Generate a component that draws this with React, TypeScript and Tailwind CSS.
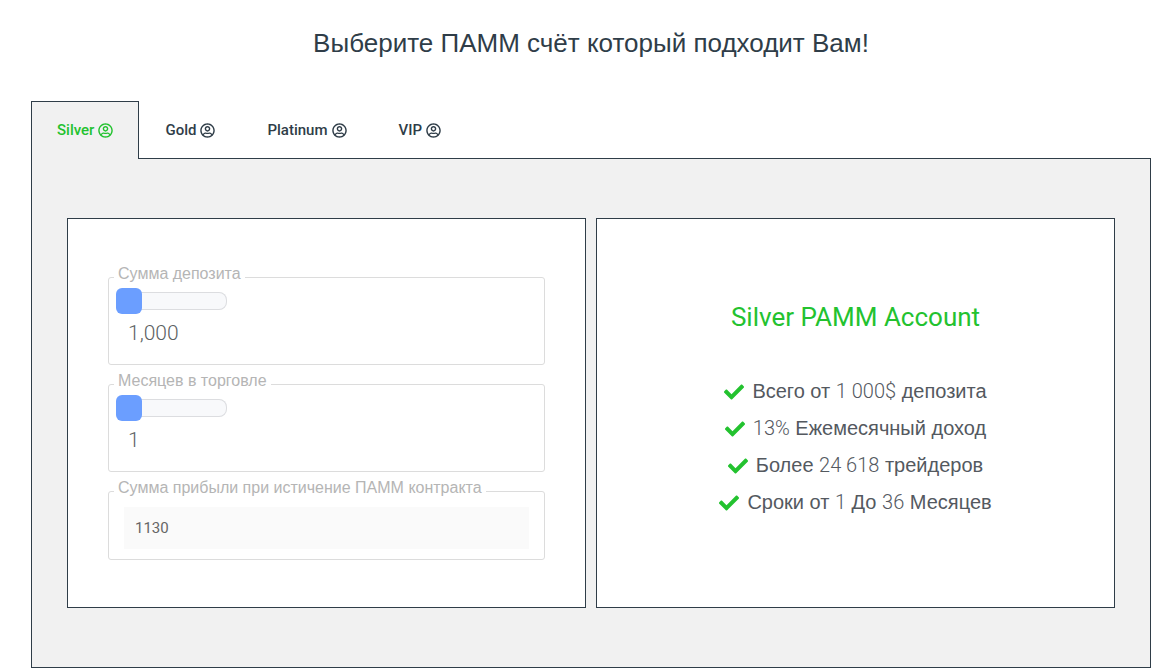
import { useState } from 'react';
import { FaCheck, FaRegUserCircle } from 'react-icons/fa';

const accounts = ['Silver', 'Gold', 'Platinum', 'VIP'];

const MONTHLY_RATE = 0.13;

const latin = 'font-[Roboto,sans-serif] font-light';

const rangeClass =
  'block w-[111px] h-[26px] appearance-none bg-transparent cursor-pointer ' +
  '[&::-webkit-slider-runnable-track]:h-[18px] [&::-webkit-slider-runnable-track]:rounded-lg ' +
  '[&::-webkit-slider-runnable-track]:bg-[#f8f9fb] [&::-webkit-slider-runnable-track]:shadow-[inset_0_0_0_1px_#dcdde0] ' +
  '[&::-webkit-slider-thumb]:appearance-none [&::-webkit-slider-thumb]:-mt-1 ' +
  '[&::-webkit-slider-thumb]:size-[26px] [&::-webkit-slider-thumb]:rounded-md [&::-webkit-slider-thumb]:bg-[#6b9eff]';

const fieldsetClass = 'min-w-0 border border-[#dcdcdc] rounded-[3px]';
const legendClass = 'ml-[5px] px-1 pb-1.5 text-base leading-4 text-[#b5b5b5]';

interface RangeFieldProps {
  label: string;
  min: number;
  max: number;
  step: number;
  value: number;
  onChange: (value: number) => void;
}

function RangeField({ label, min, max, step, value, onChange }: RangeFieldProps) {
  return (
    <fieldset className={fieldsetClass}>
      <legend className={legendClass}>{label}</legend>
      <div className="px-[7px] pb-[17px]">
        <input
          type="range"
          aria-label={label}
          min={min}
          max={max}
          step={step}
          value={value}
          onChange={(e) => onChange(Number(e.target.value))}
          className={rangeClass}
        />
        <output className={`block px-3 pt-[5px] text-[21px] leading-7 text-[#5c5f63] ${latin}`}>
          {value.toLocaleString('en-US')}
        </output>
      </div>
    </fieldset>
  );
}

export default function App() {
  const [active, setActive] = useState('Silver');
  const [deposit, setDeposit] = useState(1000);
  const [months, setMonths] = useState(1);

  const total = Math.round(deposit * (1 + MONTHLY_RATE * months));

  const features = [
    <>Всего от <span className={latin}>1 000$</span> депозита</>,
    <><span className={latin}>13%</span> Ежемесячный доход</>,
    <>Более <span className={latin}>24 618</span> трейдеров</>,
    <>Сроки от <span className={latin}>1</span> До <span className={latin}>36</span> Месяцев</>,
  ];

  return (
    <main className="bg-white pl-[31px] pr-[11px] pt-[23px] font-['Liberation_Sans',Arial,sans-serif]">
      <h1 className="text-center text-[26px] leading-10 text-[#2f3d48]">
        Выберите ПАММ счёт который подходит Вам!
      </h1>

      <div role="tablist" className="mt-[38px] flex">
        {accounts.map((name) => (
          <button
            key={name}
            type="button"
            role="tab"
            aria-selected={active === name}
            onClick={() => setActive(name)}
            className={`relative z-10 -mb-px flex h-[58px] items-center gap-1 border border-b-0 px-[25px] font-[Roboto,sans-serif] text-[15px] font-medium cursor-pointer ${
              active === name
                ? 'border-[#2f3d48] bg-[#f1f1f1] text-[#23c22f]'
                : 'border-transparent text-[#2f3d48]'
            }`}
          >
            {name}
            <FaRegUserCircle className="size-[15px]" />
          </button>
        ))}
      </div>

      <div role="tabpanel" className="border border-[#2f3d48] bg-[#f1f1f1] px-[35px] py-[59px]">
        <div className="grid grid-cols-2 gap-2.5">
          <form className="flex flex-col gap-2 border border-[#2f3d48] bg-white px-10 py-[47px]">
            <RangeField
              label="Сумма депозита"
              min={1000}
              max={5000}
              step={100}
              value={deposit}
              onChange={setDeposit}
            />
            <RangeField
              label="Месяцев в торговле"
              min={1}
              max={36}
              step={1}
              value={months}
              onChange={setMonths}
            />
            <fieldset className={fieldsetClass}>
              <legend className={legendClass}>Сумма прибыли при истичение ПАММ контракта</legend>
              <div className="px-[15px] pt-[5px] pb-2.5">
                <input
                  type="text"
                  readOnly
                  aria-label="Сумма прибыли при истичение ПАММ контракта"
                  value={total}
                  className="block h-[42px] w-full bg-[#fafafa] px-[11px] font-[Roboto,sans-serif] text-[15px] text-[#666666] outline-none"
                />
              </div>
            </fieldset>
          </form>

          <section className="flex flex-col items-center justify-center border border-[#2f3d48] bg-white pb-1">
            <h2 className="font-[Roboto,sans-serif] text-[26px] leading-8 font-normal text-[#23c22f]">
              {active} PAMM Account
            </h2>
            <ul className="mt-10 text-xl leading-[37px] text-[#54595f]">
              {features.map((feature, i) => (
                <li key={i} className="flex items-center justify-center gap-2">
                  <FaCheck className="size-5 text-[#23c22f]" />
                  <span>{feature}</span>
                </li>
              ))}
            </ul>
          </section>
        </div>
      </div>
    </main>
  );
}
